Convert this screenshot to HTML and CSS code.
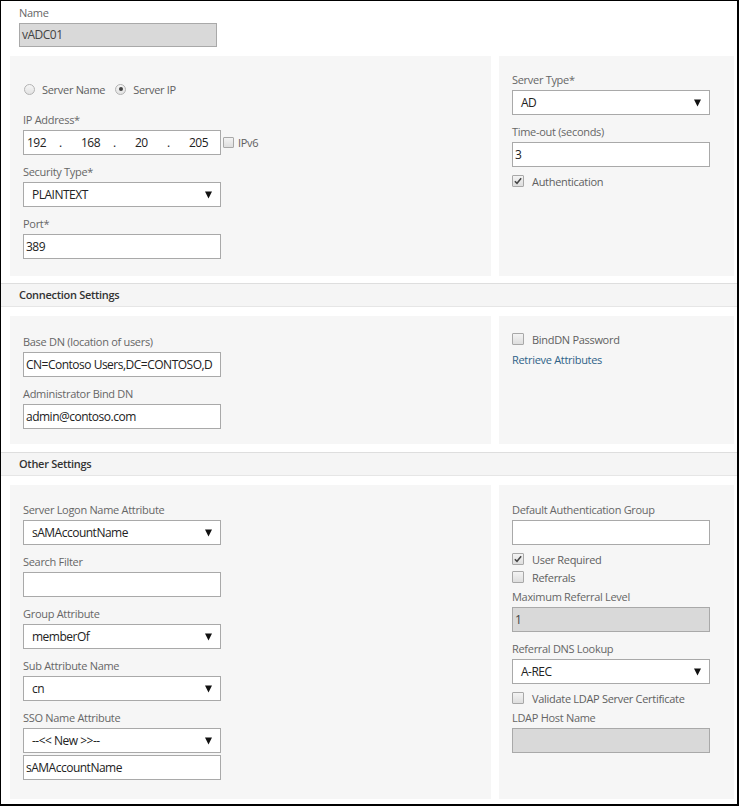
FILE: index.html
```html
<!DOCTYPE html>
<html>
<head>
<meta charset="utf-8">
<link rel="stylesheet" href="styles.css">
</head>
<body>
<div class="page">
  <div class="top">
    <div class="lbl">Name</div>
    <div class="inp disabled name-inp">vADC01</div>
  </div>

  <div class="row row1">
    <div class="panel">
      <div class="radio-row">
        <span class="radio"></span><span class="rtext">Server Name</span>
        <span class="radio on"></span><span class="rtext">Server IP</span>
      </div>
      <div class="field">
        <div class="lbl">IP Address*</div>
        <div class="ip-line">
          <div class="inp ip">
            <span class="oct">192</span><span class="dot">.</span>
            <span class="oct">168</span><span class="dot">.</span>
            <span class="oct">20</span><span class="dot">.</span>
            <span class="oct last">205</span>
          </div>
          <span class="cb small"></span><span class="ctext ipv6">IPv6</span>
        </div>
      </div>
      <div class="field">
        <div class="lbl">Security Type*</div>
        <div class="sel"><span>PLAINTEXT</span><svg class="caret" viewBox="0 0 7 8"><path d="M0 0.5H7L3.5 7.5Z"/></svg></div>
      </div>
      <div class="field last">
        <div class="lbl">Port*</div>
        <div class="inp">389</div>
      </div>
    </div>
    <div class="panel p1r">
      <div class="field">
        <div class="lbl">Server Type*</div>
        <div class="sel"><span>AD</span><svg class="caret" viewBox="0 0 7 8"><path d="M0 0.5H7L3.5 7.5Z"/></svg></div>
      </div>
      <div class="field">
        <div class="lbl">Time-out (seconds)</div>
        <div class="inp">3</div>
      </div>
      <div class="checks">
        <div class="check"><span class="cb on"><svg viewBox="0 0 12 12"><path d="M2.2 6.2L4.8 8.8L9.8 2.8" /></svg></span><span class="ctext">Authentication</span></div>
      </div>
    </div>
  </div>

  <div class="section-head">Connection Settings</div>

  <div class="row row2">
    <div class="panel">
      <div class="field">
        <div class="lbl">Base DN (location of users)</div>
        <div class="inp">CN=Contoso Users,DC=CONTOSO,D</div>
      </div>
      <div class="field last">
        <div class="lbl">Administrator Bind DN</div>
        <div class="inp">admin@contoso.com</div>
      </div>
    </div>
    <div class="panel p2r">
      <div class="check"><span class="cb"></span><span class="ctext">BindDN Password</span></div>
      <a class="link">Retrieve Attributes</a>
    </div>
  </div>

  <div class="section-head">Other Settings</div>

  <div class="row row3">
    <div class="panel">
      <div class="field">
        <div class="lbl">Server Logon Name Attribute</div>
        <div class="sel"><span>sAMAccountName</span><svg class="caret" viewBox="0 0 7 8"><path d="M0 0.5H7L3.5 7.5Z"/></svg></div>
      </div>
      <div class="field">
        <div class="lbl">Search Filter</div>
        <div class="inp"></div>
      </div>
      <div class="field">
        <div class="lbl">Group Attribute</div>
        <div class="sel"><span>memberOf</span><svg class="caret" viewBox="0 0 7 8"><path d="M0 0.5H7L3.5 7.5Z"/></svg></div>
      </div>
      <div class="field">
        <div class="lbl">Sub Attribute Name</div>
        <div class="sel"><span>cn</span><svg class="caret" viewBox="0 0 7 8"><path d="M0 0.5H7L3.5 7.5Z"/></svg></div>
      </div>
      <div class="field last">
        <div class="lbl">SSO Name Attribute</div>
        <div class="sel"><span>--&lt;&lt; New &gt;&gt;--</span><svg class="caret" viewBox="0 0 7 8"><path d="M0 0.5H7L3.5 7.5Z"/></svg></div>
        <div class="inp under">sAMAccountName</div>
      </div>
    </div>
    <div class="panel">
      <div class="field">
        <div class="lbl">Default Authentication Group</div>
        <div class="inp"></div>
      </div>
      <div class="checks">
        <div class="check"><span class="cb on"><svg viewBox="0 0 12 12"><path d="M2.2 6.2L4.8 8.8L9.8 2.8" /></svg></span><span class="ctext">User Required</span></div>
        <div class="check"><span class="cb"></span><span class="ctext">Referrals</span></div>
      </div>
      <div class="field">
        <div class="lbl">Maximum Referral Level</div>
        <div class="inp disabled">1</div>
      </div>
      <div class="field">
        <div class="lbl">Referral DNS Lookup</div>
        <div class="sel"><span>A-REC</span><svg class="caret" viewBox="0 0 7 8"><path d="M0 0.5H7L3.5 7.5Z"/></svg></div>
      </div>
      <div class="checks">
        <div class="check"><span class="cb"></span><span class="ctext">Validate LDAP Server Certificate</span></div>
      </div>
      <div class="field last">
        <div class="lbl">LDAP Host Name</div>
        <div class="inp disabled"></div>
      </div>
    </div>
  </div>
</div>
</body>
</html>
```

FILE: styles.css
```css
html, body {
  margin: 0;
  padding: 0;
  background: #fff;
}
body {
  font-family: "Open Sans", "Noto Sans", "Liberation Sans", sans-serif;
  font-size: 11px;
  letter-spacing: -0.3px;
  color: #606060;
}
.page {
  width: 736px;
  height: 803px;
  border-style: solid;
  border-color: #000;
  border-width: 1px 2px 2px 1px;
  overflow: hidden;
}
.top {
  padding: 4px 0 0 18px;
  margin-bottom: 9px;
}
.lbl {
  line-height: 16px;
  height: 16px;
  margin-bottom: 2px;
  color: #666;
  white-space: nowrap;
}
.inp, .sel {
  box-sizing: border-box;
  width: 198px;
  height: 25px;
  border: 1px solid #a9a9a9;
  background: #fff;
  color: #222;
  font-size: 12px;
  letter-spacing: -0.5px;
  line-height: 23px;
  padding: 0 2px;
  white-space: nowrap;
  overflow: hidden;
}
.inp.disabled {
  background: #d9d9d9;
  color: #444;
}
.name-inp {
  height: 24px;
  line-height: 22px;
}
.sel {
  display: flex;
  align-items: center;
  justify-content: space-between;
  padding: 0 8px 0 8px;
}
.caret {
  width: 7px;
  height: 8px;
  fill: #111;
}
.row {
  display: grid;
  grid-template-columns: 481px 235px;
  column-gap: 8px;
  margin: 0 3px 0 9px;
}
.panel {
  background: #f6f6f6;
  padding: 17px 13px;
}
.row1 .p1r {
  padding-top: 16px;
}
.field {
  margin-bottom: 9px;
}
.field.last {
  margin-bottom: 0;
}
.radio-row {
  display: flex;
  align-items: center;
  height: 16px;
  margin: 8px 0 15px;
}
.radio {
  box-sizing: border-box;
  width: 11px;
  height: 11px;
  border-radius: 50%;
  border: 1px solid #b3b3b3;
  background: linear-gradient(#f6f6f6, #e2e2e2);
  display: flex;
  align-items: center;
  justify-content: center;
  margin-left: 1px;
}
.radio.on::after {
  content: "";
  width: 4px;
  height: 4px;
  border-radius: 50%;
  background: #444;
}
.rtext {
  margin-left: 7px;
  margin-right: 9px;
}
.ip-line {
  display: flex;
  align-items: center;
}
.ip {
  display: flex;
  padding-left: 3px;
}
.oct {
  width: 32px;
}
.dot {
  width: 22px;
}
.oct.last {
  width: auto;
}
.cb {
  box-sizing: border-box;
  flex: none;
  width: 12px;
  height: 12px;
  border: 1px solid #a8a8a8;
  border-radius: 1px;
  background: linear-gradient(#f3f3f3, #dedede);
  display: inline-flex;
  align-items: center;
  justify-content: center;
}
.cb svg {
  width: 12px;
  height: 12px;
  fill: none;
  stroke: #444;
  stroke-width: 1.8;
}
.cb.small {
  width: 11px;
  height: 11px;
  margin-left: 2px;
}
.ctext {
  margin-left: 8px;
}
.ctext.ipv6 {
  margin-left: 4px;
}
.checks {
  margin: -4px 0 3px;
}
.check {
  display: flex;
  align-items: center;
  height: 18px;
}
.section-head {
  margin-top: 8px;
  margin-bottom: 9px;
  height: 22px;
  line-height: 22px;
  border-top: 1px solid #dedede;
  border-bottom: 1px solid #e6e6e6;
  background: #f5f5f5;
  padding-left: 18px;
  font-weight: 600;
  color: #333;
}
.row1 {
  height: 219px;
}
.row2 .panel {
  padding-top: 18px;
  padding-bottom: 15px;
}
.row2 .p2r {
  padding-top: 14px;
}
.link {
  display: block;
  margin-top: 4px;
  line-height: 16px;
  color: #2f6288;
}
.row3 {
  height: 314px;
}
.inp.under {
  margin-top: 2px;
}
```
